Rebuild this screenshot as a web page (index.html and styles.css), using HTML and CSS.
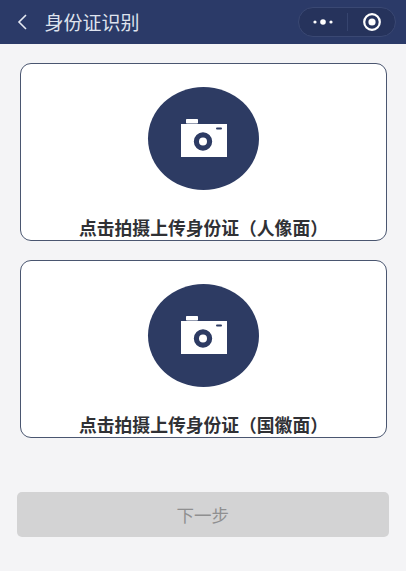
FILE: index.html
```html
<!DOCTYPE html>
<html lang="zh">
<head>
<meta charset="utf-8">
<title>身份证识别</title>
<link rel="stylesheet" href="styles.css">
</head>
<body>
<header class="nav">
  <svg class="back" viewBox="0 0 12 18" width="12" height="18"><path d="M10 2 3 9l7 7" fill="none" stroke="#e6e9f2" stroke-width="1.6"/></svg>
  <h1 class="title">身份证识别</h1>
  <div class="capsule">
    <svg class="more" viewBox="0 0 22 6" width="22" height="6"><circle cx="3" cy="3" r="1.6"/><circle cx="11" cy="3" r="2.8"/><circle cx="19" cy="3" r="1.6"/></svg>
    <span class="sep"></span>
    <svg class="target" viewBox="0 0 20 20" width="20" height="20"><circle cx="10" cy="10" r="7.8" fill="none" stroke="#fff" stroke-width="2.2"/><circle cx="10" cy="10" r="3.6" fill="#fff"/></svg>
  </div>
</header>
<main class="content">
  <section class="card">
    <div class="disc">
      <svg viewBox="0 0 46 38" width="46" height="38"><rect class="cam" x="5" y="0" width="12" height="4.500" rx="0.800"/><rect class="cam" x="0" y="5" width="46" height="33"/><rect class="slot" x="35" y="8.500" width="6" height="2" rx="1"/><circle class="lens" cx="22" cy="22.500" r="6.600"/></svg>
    </div>
    <p class="label">点击拍摄上传身份证（人像面）</p>
  </section>
  <section class="card">
    <div class="disc">
      <svg viewBox="0 0 46 38" width="46" height="38"><rect class="cam" x="5" y="0" width="12" height="4.500" rx="0.800"/><rect class="cam" x="0" y="5" width="46" height="33"/><rect class="slot" x="35" y="8.500" width="6" height="2" rx="1"/><circle class="lens" cx="22" cy="22.500" r="6.600"/></svg>
    </div>
    <p class="label">点击拍摄上传身份证（国徽面）</p>
  </section>
  <button class="next" type="button">下一步</button>
</main>
</body>
</html>
```
FILE: styles.css
```css
* { box-sizing: border-box; }
html, body { height: 100%; }
body {
  margin: 0;
  background: #f4f4f6;
  font-family: "Noto Sans CJK SC", "Noto Sans", sans-serif;
  overflow: hidden;
}
.nav {
  height: 43.500px;
  background: #2b3a68;
  display: flex;
  align-items: center;
  padding: 0 10px 0 16px;
}
.back { flex: none; }
.title {
  margin: 0 0 0 16.500px;
  font-size: 19px;
  font-weight: 400;
  color: #dfe3ee;
  line-height: 24px;
  flex: 1;
}
.capsule {
  width: 98px;
  height: 30px;
  border-radius: 15px;
  background: #26335c;
  border: 1px solid #3a4873;
  display: flex;
  align-items: center;
  padding-left: 12.500px;
}
.more { fill: #fff; flex: none; }
.sep { width: 1px; height: 18px; background: #36446e; margin: 0 14px 0 13.500px; flex: none; }
.target { flex: none; }
.content {
  padding: 19.500px 19px 0 20px;
  display: flex;
  flex-direction: column;
}
.card {
  height: 178px;
  background: #fff;
  border: 1.500px solid #4a5670;
  border-radius: 11px;
  margin-bottom: 19px;
  display: flex;
  flex-direction: column;
  align-items: center;
  padding-top: 23px;
  overflow: hidden;
}
.disc {
  width: 111px;
  height: 103px;
  border-radius: 50%;
  background: #2d3b63;
  display: flex;
  align-items: center;
  justify-content: center;
  flex: none;
  padding-bottom: 1px;
}
.cam { fill: #fff; }
.slot { fill: #2d3b63; }
.lens { fill: none; stroke: #2d3b63; stroke-width: 5.200; }
.label {
  margin: 24px 0 0;
  font-size: 17.800px;
  line-height: 26px;
  font-weight: 700;
  color: #303135;
  white-space: nowrap;
}
.next {
  margin: 35px 0 0 -3.500px;
  width: 372.500px;
  height: 45px;
  border: 0;
  border-radius: 5px;
  background: #d3d3d4;
  color: #8f8f90;
  font: 400 17.500px/26px "Noto Sans CJK SC", "Noto Sans", sans-serif;
}
```
